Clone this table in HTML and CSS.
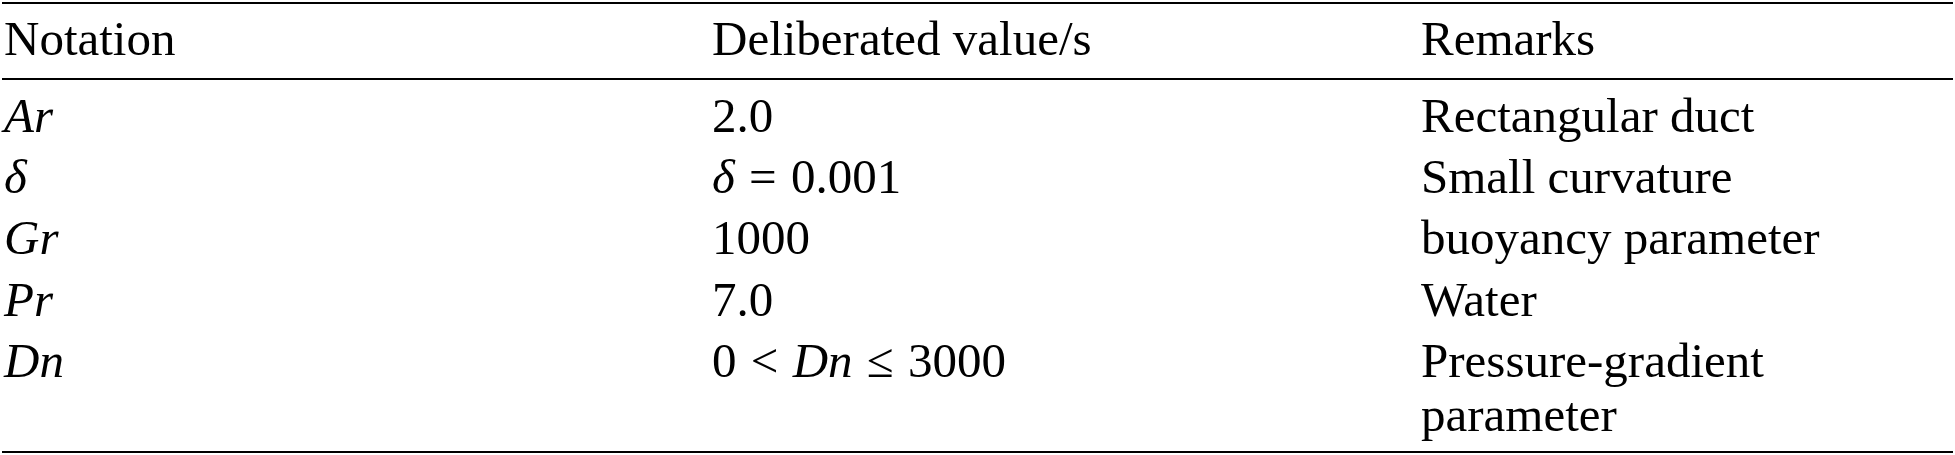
FILE: index.html
```html
<!DOCTYPE html>
<html lang="en">
<head>
    <meta charset="UTF-8">
    <meta name="viewport" content="width=device-width, initial-scale=1.0">
    <title>Parameters</title>
    <link rel="stylesheet" href="styles.css">
</head>
<body>
    <div class="table-wrap">
        <table class="param-table">
            <colgroup>
                <col class="col-notation">
                <col class="col-value">
                <col class="col-remarks">
            </colgroup>
            <thead>
                <tr>
                    <th>Notation</th>
                    <th>Deliberated value/s</th>
                    <th>Remarks</th>
                </tr>
            </thead>
            <tbody>
                <tr>
                    <td><i>Ar</i></td>
                    <td>2.0</td>
                    <td>Rectangular duct</td>
                </tr>
                <tr>
                    <td><i>δ</i></td>
                    <td><i>δ</i> <span class="rel">=</span> 0.001</td>
                    <td>Small curvature</td>
                </tr>
                <tr>
                    <td><i>Gr</i></td>
                    <td>1000</td>
                    <td>buoyancy parameter</td>
                </tr>
                <tr>
                    <td><i>Pr</i></td>
                    <td>7.0</td>
                    <td>Water</td>
                </tr>
                <tr>
                    <td><i>Dn</i></td>
                    <td>0 <span class="rel">&lt;</span> <i>Dn</i> <span class="rel">≤</span> 3000</td>
                    <td>Pressure-gradient parameter</td>
                </tr>
            </tbody>
        </table>
    </div>
</body>
</html>
```

FILE: styles.css
```css
body {
    margin: 0;
    background: #fff;
    color: #000;
    font-family: 'Liberation Serif', 'Times New Roman', serif;
}

.table-wrap {
    padding: 2px 2px 0;
}

.param-table {
    width: 100%;
    table-layout: fixed;
    border-collapse: separate;
    border-spacing: 0;
    font-size: 49px;
    line-height: 54px;
}

.col-notation {
    width: 708px;
}

.col-value {
    width: 709px;
}

.param-table th {
    font-weight: normal;
    text-align: left;
    padding: 8px 0 12px 2px;
    border-top: 2px solid #000;
    border-bottom: 2px solid #000;
}

.param-table td {
    text-align: left;
    vertical-align: top;
    padding: 3.7px 0 3.7px 2px;
}

.param-table tbody tr:first-child td {
    padding-top: 8.7px;
}

.param-table tbody tr:last-child td {
    padding-bottom: 8.7px;
    border-bottom: 2px solid #000;
}

.param-table i {
    font-style: italic;
}

/* relation signs get a little more room, like in typeset math */
.rel {
    margin: 0 2px;
}
```
